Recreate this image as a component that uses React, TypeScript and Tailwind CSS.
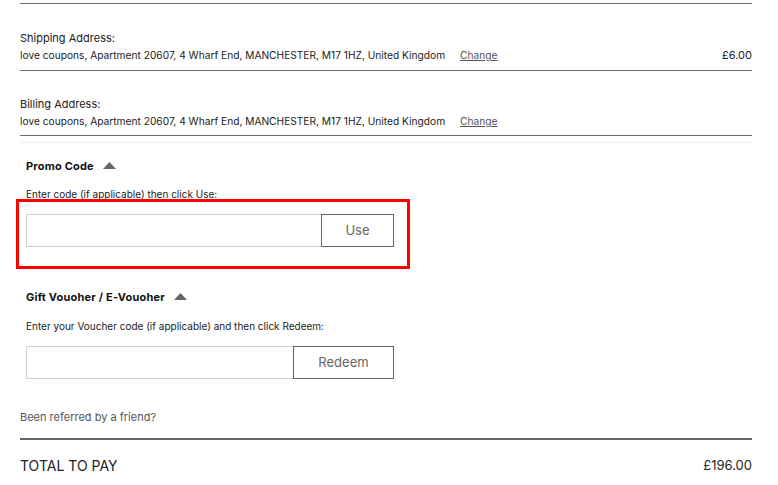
import React from 'react';

const font = { fontFamily: 'Inter, "Liberation Sans", Arial, sans-serif' };

const Caret = () => (
  <svg width="13" height="8" viewBox="0 0 13 8" className="ml-[9px]">
    <polygon points="6.5,0 13,7 0,7" fill="#666666" />
  </svg>
);

const AddressRow = ({ label, price, pad }: { label: string; price?: string; pad: string }) => (
  <div className={`border-b border-[#6b6b6b] ${pad}`}>
    <p className="text-[11px] leading-[17px] text-[#222]">{label}</p>
    <div className="flex items-center text-[10.2px] leading-[17px] text-[#222]">
      <span>
        love coupons, Apartment 20607, 4 Wharf End, MANCHESTER, M17 1HZ, United Kingdom
      </span>
      <a href="#" className="ml-[15px] text-[#555] underline">
        Change
      </a>
      {price && <span className="ml-auto text-[11px]">{price}</span>}
    </div>
  </div>
);

const CodeField = ({
  title,
  hint,
  button,
  inputWidth,
  buttonWidth,
  hintGap,
}: {
  title: string;
  hint: string;
  button: string;
  inputWidth: string;
  buttonWidth: string;
  hintGap: string;
}) => (
  <div className="pl-[6px]">
    <div className="flex items-center">
      <h3 className="text-[11px] font-bold tracking-[0.2px] text-[#111] leading-[14px]">{title}</h3>
      <Caret />
    </div>
    <p className={`${hintGap} text-[10px] leading-[14px] text-[#222]`}>{hint}</p>
    <div className="mt-[13px] flex h-[33px]">
      <input className={`${inputWidth} h-full border border-[#d0d0d0] border-r-0 outline-none`} />
      <button className={`${buttonWidth} h-full border border-[#666] text-[13px] text-[#666]`}>
        {button}
      </button>
    </div>
  </div>
);

export default function App() {
  return (
    <div className="bg-white w-[778px] h-[485px] overflow-hidden" style={font}>
      <div className="ml-5 w-[732px] pt-[3px]">
        <div className="border-t border-[#6b6b6b]" />
        <AddressRow label="Shipping Address:" price="£6.00" pad="pt-[26px] pb-[6px]" />
        <AddressRow label="Billing Address:" pad="pt-[25px] pb-[5px]" />
        <div className="mt-[6px] border-t border-[#ececec]" />

        <div className="pt-[16px]">
          <div className="relative">
            <CodeField
              title="Promo Code"
              hint="Enter code (if applicable) then click Use:"
              button="Use"
              inputWidth="w-[295px]"
              buttonWidth="w-[73px]"
              hintGap="mt-[14px]"
            />
            <div className="absolute left-[-4px] top-[40px] w-[394px] h-[70px] border-[3px] border-[#ff0000] pointer-events-none" />
          </div>

          <div className="mt-[43px]">
            <CodeField
              title="Gift Vouoher / E-Vouoher"
              hint="Enter your Voucher code (if applicable) and then click Redeem:"
              button="Redeem"
              inputWidth="w-[267px]"
              buttonWidth="w-[101px]"
              hintGap="mt-[15px]"
            />
          </div>

          <p className="mt-[31px] text-[11px] leading-[14px] text-[#555]">Been referred by a friend?</p>
        </div>

        <div className="mt-[14px] border-t-2 border-[#666]" />
        <div className="flex items-center justify-between pt-[15px] text-[14px] text-[#222]">
          <span>TOTAL TO PAY</span>
          <span className="text-[13px]">£196.00</span>
        </div>
      </div>
    </div>
  );
}
